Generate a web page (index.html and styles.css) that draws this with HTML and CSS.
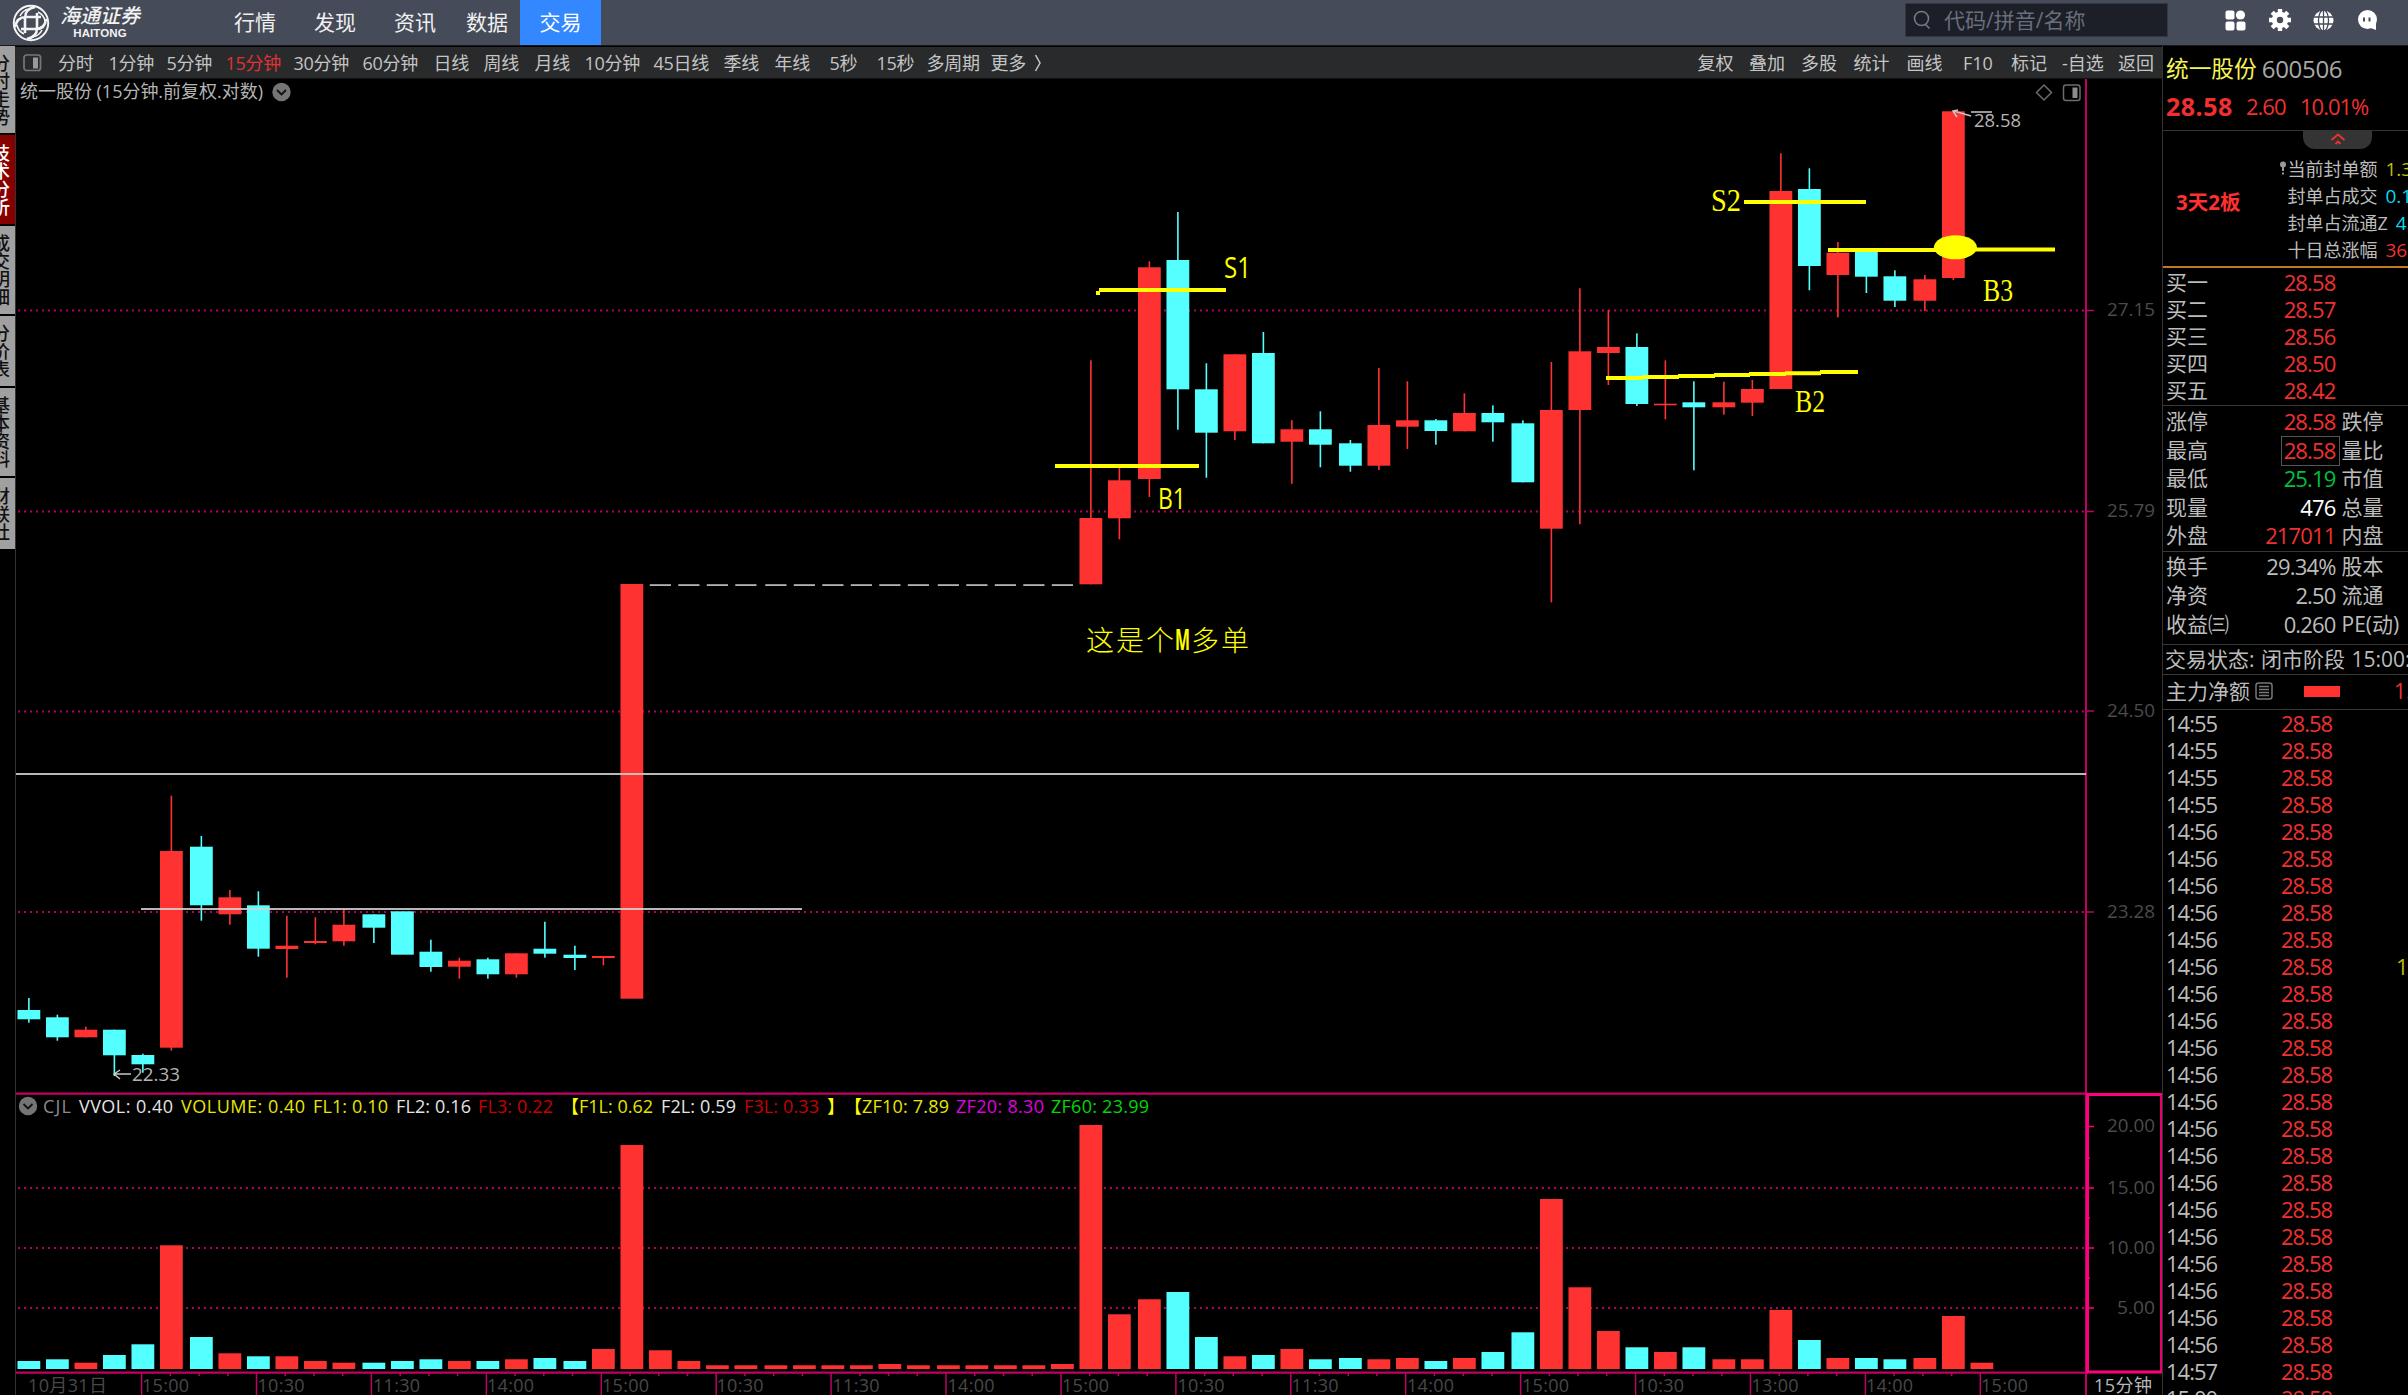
FILE: index.html
```html
<!DOCTYPE html>
<html lang="zh-CN">
<head>
<meta charset="utf-8">
<title>统一股份 600506</title>
<link rel="stylesheet" href="styles.css">
</head>
<body>
<div class="app">
  <header class="top">
    <div class="brand">
      <svg class="brand-mark" viewBox="0 0 38 38" width="38" height="38" fill="none" stroke="#f4f4f4" stroke-width="2.6">
        <circle cx="19" cy="19" r="17.2" stroke-width="2"/>
        <path d="M13 29V14Q13 5 23 3M25 9v15q0 9-10 11M9 25h15q9 0 10-10M29 13H14Q5 13 3 23"/>
        <path d="M8 12Q11 6 17 5M30 26q-3 6-9 7M26 8q6 3 7 9M12 30q-6-3-7-9" stroke-width="1.6"/>
      </svg>
      <div class="brand-name"><span class="brand-cn">海通证券</span><span class="brand-en">HAITONG</span></div>
    </div>
    <nav class="nav"><span>行情</span><span>发现</span><span>资讯</span><span>数据</span><span class="active">交易</span></nav>
    <div class="search">
      <svg width="18" height="20" viewBox="0 0 18 20" fill="none" stroke="#737985" stroke-width="1.6"><circle cx="8.5" cy="8.5" r="7"/><path d="M12.5 14.5l4 4"/></svg>
      <span>代码/拼音/名称</span>
    </div>
    <div class="tools">
      <svg width="21" height="21" viewBox="0 0 21 21" fill="#fff"><rect x="0.5" y="0.5" width="9" height="9" rx="2"/><circle cx="15.5" cy="5" r="4.6"/><rect x="0.5" y="11.5" width="9" height="9" rx="2"/><rect x="11.5" y="11.5" width="9" height="9" rx="2"/></svg>
      <svg width="22" height="22" viewBox="0 0 22 22"><circle cx="11" cy="11" r="5.7" fill="none" stroke="#fff" stroke-width="5"/><path d="M11 0v4M11 18v4M0 11h4M18 11h4M3.2 3.2l3 3M15.8 15.8l3 3M3.2 18.8l3-3M15.8 6.2l3-3" stroke="#fff" stroke-width="4.4"/></svg>
      <svg width="21" height="21" viewBox="0 0 21 21"><circle cx="10.500" cy="10.500" r="10" fill="#fff"/><path d="M10.500 0v21M0.500 7h20M0.500 14h20" stroke="#454b58" stroke-width="1.3"/><ellipse cx="10.500" cy="10.500" rx="5" ry="10.500" fill="none" stroke="#454b58" stroke-width="1.3"/></svg>
      <svg width="21" height="21" viewBox="0 0 21 21"><circle cx="10.500" cy="9.500" r="9.500" fill="#fff"/><path d="M11 17l8-5v8z" fill="#fff"/><path d="M7 7.500v4M12.500 7.500v4" stroke="#454b58" stroke-width="2"/></svg>
    </div>
  </header>
  <div class="main">
    <aside class="side">
      <div class="tab t1"><span>分时走势</span></div>
      <div class="tab t2 on"><span>技术分析</span></div>
      <div class="tab t3"><span>成交明细</span></div>
      <div class="tab t4"><span>分价表</span></div>
      <div class="tab t5"><span>基本资料</span></div>
      <div class="tab t6"><span>财联社</span></div>
    </aside>
    <section class="center">
      <div class="toolbar">
        <div class="periods">
          <svg width="19" height="18" viewBox="0 0 19 18"><rect x="1" y="1" width="16.500" height="15.500" rx="2.500" fill="none" stroke="#777" stroke-width="1.700"/><rect x="10" y="3.500" width="5" height="11" fill="#999"/></svg>
          <span>分时</span><span>1分钟</span><span>5分钟</span><span class="cur">15分钟</span><span>30分钟</span><span>60分钟</span><span>日线</span><span>周线</span><span>月线</span><span>10分钟</span><span>45日线</span><span>季线</span><span>年线</span><span>5秒</span><span>15秒</span><span>多周期</span><span>更多</span>
          <svg width="8" height="18" viewBox="0 0 8 18" fill="none" stroke="#c8c8c8" stroke-width="1.500"><path d="M1.500 1l4.500 8-4.500 8"/></svg>
        </div>
        <div class="actions"><span>复权</span><span>叠加</span><span>多股</span><span>统计</span><span>画线</span><span>F10</span><span>标记</span><span>-自选</span><span>返回</span></div>
      </div>
      <svg class="chart" viewBox="15 79 2147 1316" width="2147" height="1316">
        <path class="edge" d="M15.500 79v1316"/>
        <g class="grid"><path d="M18 310.500H2086M18 511.500H2086M18 711.500H2086M18 912H2086M18 1188H2086M18 1248H2086M18 1308H2086"/></g>
        <g id="bars"></g>
        <g class="frame">
          <path d="M2086 79v1316" stroke-width="2"/>
          <path d="M16 1093.700H2088M16 1372.700H2088" stroke-width="2.200"/>
          <path d="M2087 310.500h7M2087 511.500h7M2087 711h7M2087 912h7" stroke-width="1.500"/>
          <path id="ticks" stroke-width="1.500"/>
        </g>
        <g class="hot"><path d="M2087.500 1094.500V1372M2086 1094.500H2162M2086 1372H2162" stroke-width="3"/><path d="M2161 1094V1373" stroke-width="1.800"/><path d="M2088 1126.500h6M2088 1188h6M2088 1248h6M2088 1308h6M2088 1158h2M2088 1218h2M2088 1278h2" stroke-width="1.500"/></g>
        <g class="level"><path d="M16 774H2086M141 909H802"/></g>
        <g class="pen">
          <path d="M1099 290H1226M1096 293h4M1055 466H1199M1744 202H1866M1828 250H1940M1940 249.500H2055"/>
          <path d="M1606 378H1643M1643 377H1679M1678 376H1715M1714 375H1750M1749 374H1786M1785 373.300H1821M1820 372H1858"/>
          <ellipse cx="1955.400" cy="247.300" rx="21.500" ry="12"/>
        </g>
        <g class="note">
          <text x="1224" y="277.500" textLength="27" lengthAdjust="spacingAndGlyphs">S1</text>
          <text x="1158" y="508.500" textLength="28" lengthAdjust="spacingAndGlyphs">B1</text>
          <text class="serif" x="1711" y="211" textLength="30" lengthAdjust="spacingAndGlyphs">S2</text>
          <text class="serif" x="1795" y="412" textLength="30" lengthAdjust="spacingAndGlyphs">B2</text>
          <text class="serif" x="1983" y="301" textLength="30" lengthAdjust="spacingAndGlyphs">B3</text>
          <text class="kai" x="1086" y="651">这是个</text><text class="em" x="1175" y="650" textLength="15" lengthAdjust="spacingAndGlyphs">M</text><text class="kai" x="1191" y="651">多单</text>
        </g>
        <g class="mark">
          <path d="M114 1074h17M120 1070l-6 4 6 5M1971 116l-17-5M1958 110l-5 1 4 6"/><path d="M1971 112h21" stroke-width="1.800"/>
          <text x="132" y="1081" textLength="48" lengthAdjust="spacingAndGlyphs">22.33</text><text x="1974" y="126.500" textLength="47" lengthAdjust="spacingAndGlyphs">28.58</text>
        </g>
        <g class="axis">
          <text x="2107" y="316" textLength="48" lengthAdjust="spacingAndGlyphs">27.15</text><text x="2107" y="517" textLength="48" lengthAdjust="spacingAndGlyphs">25.79</text><text x="2107" y="716.500" textLength="48" lengthAdjust="spacingAndGlyphs">24.50</text><text x="2107" y="917.500" textLength="48" lengthAdjust="spacingAndGlyphs">23.28</text>
          <text x="2107" y="1132" textLength="48" lengthAdjust="spacingAndGlyphs">20.00</text><text x="2107" y="1193.500" textLength="48" lengthAdjust="spacingAndGlyphs">15.00</text><text x="2107" y="1253.500" textLength="48" lengthAdjust="spacingAndGlyphs">10.00</text><text x="2117" y="1313.500" textLength="38" lengthAdjust="spacingAndGlyphs">5.00</text>
        </g>
        <g class="time">
          <text x="28" y="1391.500" textLength="79">10月31日</text><text x="142" y="1391.500" textLength="47">15:00</text><text x="257.500" y="1391.500" textLength="47">10:30</text><text x="373" y="1391.500" textLength="47">11:30</text><text x="487" y="1391.500" textLength="47">14:00</text><text x="602" y="1391.500" textLength="47">15:00</text><text x="716.500" y="1391.500" textLength="47">10:30</text><text x="832.500" y="1391.500" textLength="47">11:30</text><text x="947.500" y="1391.500" textLength="47">14:00</text><text x="1062" y="1391.500" textLength="47">15:00</text><text x="1177.500" y="1391.500" textLength="47">10:30</text><text x="1291.500" y="1391.500" textLength="47">11:30</text><text x="1407" y="1391.500" textLength="47">14:00</text><text x="1522" y="1391.500" textLength="47">15:00</text><text x="1637" y="1391.500" textLength="47">10:30</text><text x="1751.500" y="1391.500" textLength="47">13:00</text><text x="1866" y="1391.500" textLength="47">14:00</text><text x="1981" y="1391.500" textLength="47">15:00</text>
          <text class="lit" x="2094" y="1391.500" textLength="58">15分钟</text>
        </g>
        <g class="label">
          <text x="20" y="98" fill="#b4b4b4" textLength="243">统一股份 (15分钟.前复权.对数)</text>
          <text x="43" y="1112.500" fill="#8c8c8c" textLength="28">CJL</text>
          <text x="79" y="1112.500" fill="#e4e4e4" textLength="94">VVOL: 0.40</text>
          <text x="181" y="1112.500" fill="#e6e600" textLength="124">VOLUME: 0.40</text>
          <text x="313" y="1112.500" fill="#e6e600" textLength="75">FL1: 0.10</text>
          <text x="396" y="1112.500" fill="#e4e4e4" textLength="75">FL2: 0.16</text>
          <text x="478" y="1112.500" fill="#c80000" textLength="75">FL3: 0.22</text>
          <text x="561" y="1112.500" fill="#ff0">【</text><text x="579" y="1112.500" fill="#e6e600" textLength="74">F1L: 0.62</text>
          <text x="661" y="1112.500" fill="#e4e4e4" textLength="75">F2L: 0.59</text>
          <text x="744" y="1112.500" fill="#c80000" textLength="75">F3L: 0.33</text>
          <text x="827" y="1112.500" fill="#ff0">】</text><text x="844" y="1112.500" fill="#ff0">【</text>
          <text x="862" y="1112.500" fill="#e6e600" textLength="87">ZF10: 7.89</text>
          <text x="956" y="1112.500" fill="#e000e0" textLength="88">ZF20: 8.30</text>
          <text x="1051" y="1112.500" fill="#00d800" textLength="98">ZF60: 23.99</text>
        </g>
        <g class="knob"><circle cx="281.500" cy="92" r="9.200"/><path d="M277 90l4.500 4.500 4.500-4.500"/><circle cx="28" cy="1106" r="9.200"/><path d="M23.500 1104l4.500 4.500 4.500-4.500"/></g>
        <g class="corner"><path d="M2044 85l7.500 7.500-7.500 7.500-7.500-7.500z"/><rect x="2063.500" y="85" width="16.500" height="15.500" rx="2.500"/><path class="fill" d="M2072.500 87.500h5v10.500h-5z"/></g>
      </svg>
    </section>
    <aside class="quote">
      <div class="title"><b>统一股份</b><span>600506</span></div>
      <div class="price"><b>28.58</b><span>2.60</span><span>10.01%</span></div>
      <div class="limit">
        <div class="fold"><svg width="16" height="12" viewBox="0 0 16 12" fill="none" stroke="#f03030" stroke-width="1.800"><path d="M1.500 7L8 1.500 14.500 7M5.500 11L8 8.500l2.500 2.500"/></svg></div>
        <div class="streak">3天2板</div>
        <div class="facts">
          <p><i><svg width="6" height="14" viewBox="0 0 6 14" fill="#999"><circle cx="3" cy="3.500" r="3"/><path d="M2 5h2v5H2zM2 11.500h2v2H2z"/></svg></i>当前封单额<em class="yel">1.35亿</em></p>
          <p>封单占成交<em class="cya">0.13</em></p>
          <p>封单占流通Z<em class="cya">4.13</em></p>
          <p>十日总涨幅<em class="red">36.42</em></p>
        </div>
      </div>
      <div class="rows bids">
        <div><span>买一</span><b>28.58</b></div><div><span>买二</span><b>28.57</b></div><div><span>买三</span><b>28.56</b></div><div><span>买四</span><b>28.50</b></div><div><span>买五</span><b>28.42</b></div>
      </div>
      <div class="rows stats">
        <div><span>涨停</span><b>28.58</b><span>跌停</span></div><div><span>最高</span><b class="boxed">28.58</b><span>量比</span></div><div><span>最低</span><b class="grn">25.19</b><span>市值</span></div><div><span>现量</span><b class="wht">476</b><span>总量</span></div><div><span>外盘</span><b>217011</b><span>内盘</span></div>
      </div>
      <div class="rows funds">
        <div><span>换手</span><b class="gry">29.34%</b><span>股本</span></div><div><span>净资</span><b class="gry">2.50</b><span>流通</span></div><div><span>收益㈢</span><b class="gry">0.260</b><span>PE(动)</span></div>
      </div>
      <div class="status">交易状态: 闭市阶段 15:00:00</div>
      <div class="flow"><span>主力净额</span>
        <svg width="18" height="18" viewBox="0 0 18 18" fill="none" stroke="#777" stroke-width="1.500"><rect x="1" y="1" width="16" height="16" rx="2.500"/><path d="M4 4.500h10M4 7.500h10M4 10.500h10M4 13.500h10"/></svg>
        <i class="bar"></i><em>1.2</em></div>
      <div class="deals" id="deals"></div>
    </aside>
  </div>
</div>
<script src="chart.js"></script>
</body>
</html>
```
FILE: styles.css
```css
* { box-sizing: border-box; }
body { margin: 0; background: #000; color: #bcbcbc; font-family: "Open Sans", "Noto Sans CJK SC", sans-serif; overflow: hidden; }
.app { width: 2408px; height: 1395px; display: flex; flex-direction: column; overflow: hidden; }

.top { height: 46px; flex: none; display: flex; background: #454b58; border-bottom: 1px solid #16181c; }
.brand { width: 208px; display: flex; align-items: center; padding-left: 12px; }
.brand-name { display: flex; flex-direction: column; align-items: center; width: 84px; margin-left: 8px; color: #f2f2f2; }
.brand-cn { font-size: 20px; line-height: 21px; font-weight: 500; font-style: italic; white-space: nowrap; }
.brand-en { font: bold 11.5px/14px "Liberation Sans", sans-serif; letter-spacing: 0.1px; }
.nav { display: grid; grid-template-columns: 80px 80px 72px 54px 81px; padding-left: 26px; font-size: 21px; line-height: 45px; color: #f0f0f0; }
.nav span { white-space: nowrap; }
.nav .active { background: #3388ff; color: #fff; text-align: center; }
.search { width: 263px; height: 34px; margin: 3px 0 0 1304px; background: #1c1f27; border: 1px solid #343843; display: flex; align-items: center; gap: 13px; padding-left: 7px; font-size: 21px; line-height: 34px; color: #686e7c; white-space: nowrap; }
.tools { display: flex; align-items: center; gap: 22.7px; margin-left: 57px; height: 40px; }

.main { flex: 1; display: flex; min-height: 0; }
.side { width: 15px; flex: none; display: flex; flex-direction: column; gap: 2px; overflow: hidden; }
.tab { background: #a0a0a0; color: #111; display: flex; align-items: center; overflow: hidden; flex: none; }
.tab span { display: block; width: 18px; flex: none; margin-left: -8px; font-size: 18px; line-height: 18px; font-weight: 500; word-break: break-all; }
.tab.on { background: #860000; color: #fff; }
.t1 { height: 87px; } .t2 { height: 89px; } .t3 { height: 88px; } .t4 { height: 70px; } .t5 { height: 88px; } .t6 { height: 71px; }

.center { width: 2147px; flex: none; display: flex; flex-direction: column; }
.toolbar { height: 33px; border-top: 1px solid #000; border-bottom: 1px solid #111; flex: none; background: #282a2c; display: flex; justify-content: space-between; font-size: 18px; line-height: 32px; color: #c4c4c4; white-space: nowrap; }
.periods { display: grid; grid-template-columns: 35px 50.5px 58px 59px 68px 69px 71px 50px 51px 50px 69px 70px 51px 55px 47px 50px 64px 43px 10px; align-items: center; padding-left: 8px; letter-spacing: -0.3px; }
.periods .cur { color: #e03232; }
.actions { display: grid; grid-template-columns: 51.5px 52px 52.5px 53px 56.5px 48px 51px 56px 44px; }

.chart { display: block; flex: none; }
.edge { stroke: #333; }
.grid path { fill: none; stroke: #b80062; stroke-width: 1.8; stroke-dasharray: 2 4; }
.frame path { fill: none; stroke: #c00064; }
.hot path { fill: none; stroke: #ff007f; }
.up { fill: #ff3232; } .down { fill: #54ffff; } .flat { fill: #b4b4b4; }
.level path { fill: none; stroke: #d2d2d2; stroke-width: 1.8; stroke-opacity: 0.88; }
.pen path { fill: none; stroke: #ff0; stroke-width: 4; }
.pen ellipse { fill: #ff0; }
.note { fill: #ff0; font-size: 29px; }
.note .serif { font-family: "Liberation Serif", serif; font-size: 31px; }
.note .kai { font-size: 28px; font-weight: 300; letter-spacing: 2px; }
.note .em { font-weight: 700; font-size: 28px; }
.mark path { fill: none; stroke: #c8c8c8; stroke-width: 1.5; }
.mark text { fill: #b4b4b4; font-size: 19px; }
.axis text { fill: #4b4b4b; font-size: 19px; }
.time text { fill: #484848; font-size: 18px; }
.time .lit { fill: #b8b8b8; }
.label text { font-size: 18px; }
.knob circle { fill: #757575; }
.knob path { fill: none; stroke: #111; stroke-width: 1.8; }
.corner path, .corner rect { fill: none; stroke: #6c6c6c; stroke-width: 1.5; }
.corner .fill { fill: #8c8c8c; stroke: none; }

.quote { width: 246px; flex: none; border-left: 1px solid #333; overflow: hidden; white-space: nowrap; }
.title { height: 46px; line-height: 45px; display: flex; gap: 5px; padding-left: 3px; font-size: 24px; color: #a8a8a8; }
.title b { font-weight: 400; font-size: 22.7px; color: #f4f45a; }
.title span { letter-spacing: -0.3px; }
.price { height: 39px; line-height: 28px; border-bottom: 1px solid #333; display: flex; padding-left: 3px; color: #f03030; font-size: 22px; letter-spacing: -1px; }
.price b { font-size: 25px; width: 80px; letter-spacing: 0.5px; }
.price span { width: 54px; }
.limit { height: 137px; border-bottom: 2px solid #c07a1e; display: grid; grid-template-columns: 124.5px 1fr; grid-template-rows: 18px 1fr; }
.fold { grid-column: 1 / 3; width: 69px; height: 18px; margin-left: 140px; background: #343434; border-radius: 0 0 12px 12px; display: flex; justify-content: center; align-items: flex-start; padding-top: 2px; }
.streak { padding-left: 13px; line-height: 107px; font-size: 20.5px; font-weight: 700; color: #ff3030; }
.facts { padding-top: 7px; font-size: 18px; }
.facts p { margin: 0; height: 27px; line-height: 26px; position: relative; }
.facts i { position: absolute; left: -8px; top: -1px; }
.facts em { font-style: normal; margin-left: 8px; font-size: 19px; }
.yel { color: #c0c000; } .cya { color: #00dcf0; } .red { color: #f03030; }
.rows { font-size: 21px; border-bottom: 1px solid #383838; display: flex; flex-direction: column; padding-left: 3px; }
.rows div { display: grid; grid-template-columns: 70px 99.5px 1fr; }
.rows div span:last-child:not(:first-child) { padding-left: 6px; }
.rows b { font-weight: 400; color: #f03030; font-size: 22px; text-align: right; letter-spacing: -0.85px; }
.rows .grn { color: #00c040; } .rows .wht { color: #fff; } .rows .gry { color: #bcbcbc; }
.bids { height: 138px; padding-top: 1px; } .bids div { height: 27px; line-height: 26px; }
.stats { height: 146px; padding-top: 2px; } .stats div { height: 28.6px; line-height: 27px; }
.stats .boxed { outline: 1px solid #555; justify-self: end; padding: 0 3px 0 2px; margin-right: -3px; }
.funds { height: 93px; padding-top: 1px; } .funds div { height: 28.8px; line-height: 27px; }
.status { height: 30px; line-height: 28px; font-size: 21px; padding-left: 2px; border-bottom: 1px solid #383838; word-spacing: 1px; }
.flow { height: 35px; line-height: 32px; border-bottom: 1px solid #383838; padding: 0 0 2px 3px; display: flex; align-items: center; font-size: 21px; }
.flow span { width: 89px; flex: none; }
.flow svg { flex: none; }
.flow .bar { width: 36px; height: 11px; background: #ff3232; margin: 0 54px 0 31px; flex: none; }
.flow em { font-style: normal; color: #f03030; }
.deals { font-size: 22px; letter-spacing: -1px; padding-left: 3px; }
.deals div { height: 27px; line-height: 26px; display: grid; grid-template-columns: 115px 115px 1fr; }
.deals b { font-weight: 400; color: #f03030; }
.deals em { font-style: normal; color: #b9b900; }
```
FILE: chart.js
```js
// Candles: [direction, high, body top, body bottom, low], u = rising, d = falling
const candles = [
['d',998,1010,1019.3,1022.7],['d',1014.7,1017.3,1037.3,1040.7],['u',1026.7,1029.7,1037.3,1037.3],['d',1029.7,1029.7,1055.3,1076],['d',1053.7,1055,1064.3,1072.7],
['u',795.7,851,1047.7,1050.7],['d',836,846.7,905.3,920.7],['u',890,897.3,914.3,924.7],['d',891.3,905.3,948.7,956.7],['u',915.7,945.7,949,977.7],
['u',917.3,941,943,944.3],['u',909.3,924.7,941.3,945.7],['d',914.3,914.3,927.7,943],['d',911.3,911.3,954.7,954.7],['d',939.7,951.7,967,971.7],
['u',957.7,960.7,966.7,978.7],['d',957.7,959.3,974.3,978.7],['u',953.3,953.3,974.3,977.7],['d',921.7,948.7,953.7,957.7],['d',945.7,954.7,958,970],
['u',956,956,958,965.3],['u',584,584,998.7,998.7],
...Array(15).fill(['f',584.2,584.2,586,586]),
['u',360.3,518,584.3,584.3],['u',466.7,480.3,518.3,539.3],['u',261.3,267.3,479,497],['d',212,260,389.3,429.7],['d',363.3,389.3,432.7,477.7],
['u',354.3,354.3,431.3,440],['d',332,353,443.3,443.3],['u',420.3,429.3,441.7,483.7],['d',411.3,429.3,444.7,467.3],['d',440,443.3,465.7,471.7],
['u',368,425,465.7,470],['u',381.3,420.3,426.7,449],['d',419,420.3,431,444.7],['u',393.3,413,431.3,431.3],['d',405.3,413,422.3,441.7],
['d',420.3,423.3,482.3,482.3],['u',362,410,528.7,602.3],['u',288.3,351.3,410,524.3],['u',310,347,353,385],['d',333.3,347,404,406],
['u',360.3,403.7,405.3,419.3],['d',381.3,402.3,407.3,470.3],['u',381.7,402.3,407.3,414.7],['u',380,389,402.7,416],['u',153.3,191,389,389],
['d',168.3,189,266,290.3],['u',242,252.7,275,317.3],['d',251.3,251.3,276.7,293],['d',270.3,276.3,300.7,307],['u',275,279.3,300.7,311],
['u',111.3,111.3,278,280]
];
// Height of each volume bar in pixels
const volumes = [8,9.7,6.3,14,24.7,123.7,32,15.7,12.7,12.7,8,6.3,6.3,8,9.7,8,8,9.7,11,8,20,224,18.7,8,
3.7,3.7,3.7,3.7,3.7,3.7,5,3.7,3.7,3.7,3.7,3.7,5,244,54.7,69.7,77,32,12.7,14,20,9.7,11,9.7,11,8,11,17,36.7,
170,81.7,38,21.7,17,21.7,9.7,9.7,59,29,11,11,9.7,11,53,6.3];
const BASE = 1369;
// Bar centres sit on whole steps of 1.5px, 19 steps apart with an extra step every 6 or 7 bars
const centre = i => 1.5 * (19.25 + 19 * i + Math.floor(0.15 * i + 0.22));
const cls = { u: 'up', d: 'down', f: 'flat' };
const rect = (c, x, y, w, h) => `<rect class="${c}" x="${x.toFixed(2)}" y="${y}" width="${w}" height="${h.toFixed(2)}"/>`;
let out = '';
candles.forEach(([k, high, top, bottom, low], i) => {
  const x = centre(i);
  if (low - high > bottom - top) out += rect(cls[k], x - 0.8, high, 1.6, low - high);
  const half = k === 'f' ? 10.6 : 11.4;
  out += rect(cls[k], x - half, top, half * 2, bottom - top);
});
volumes.forEach((h, i) => {
  const k = candles[i] && candles[i][0] === 'd' ? 'down' : 'up';
  out += rect(k, centre(i) - 11.4, BASE - h, 22.8, h);
});
document.getElementById('bars').innerHTML = out;

let ticks = '';
for (let i = 0; i <= 64; i++) ticks += `M${(141.6 + i * 28.73).toFixed(1)} 1373V${i % 4 ? 1376 : 1395}`;
document.getElementById('ticks').setAttribute('d', ticks);

const times = [...Array(4).fill('14:55'), ...Array(20).fill('14:56'), '14:57', '15:00'];
document.getElementById('deals').innerHTML = times.map((t, i) =>
  `<div><span>${t}</span><b>28.58</b><em>${i === 9 ? '17' : ''}</em></div>`).join('');
```
